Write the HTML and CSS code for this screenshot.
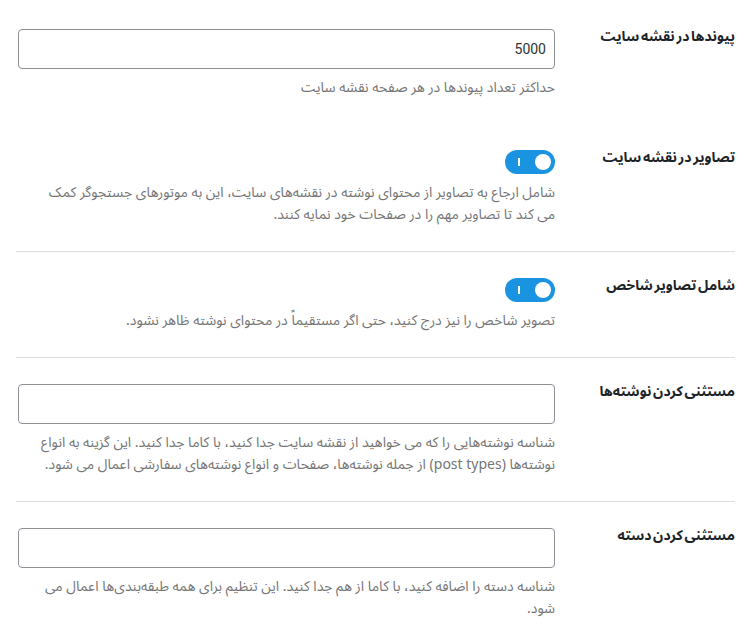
FILE: index.html
```html
<!DOCTYPE html>
<html lang="fa" dir="rtl">
<head>
<meta charset="utf-8">
<link rel="stylesheet" href="styles.css">
</head>
<body>
<div class="settings">
  <div class="row no-line">
    <div class="label">پیوندها در نقشه سایت</div>
    <div class="control">
      <div class="input">5000</div>
      <p class="desc">حداکثر تعداد پیوندها در هر صفحه نقشه سایت</p>
    </div>
  </div>
  <div class="row no-line">
    <div class="label">تصاویر در نقشه سایت</div>
    <div class="control">
      <div class="toggle"><span class="bar"></span><span class="knob"></span></div>
      <p class="desc">شامل ارجاع به تصاویر از محتوای نوشته در نقشه‌های سایت، این به موتورهای جستجوگر کمک می&nbsp;کند تا تصاویر مهم را در صفحات خود نمایه کنند.</p>
    </div>
  </div>
  <div class="row">
    <div class="label">شامل تصاویر شاخص</div>
    <div class="control">
      <div class="toggle"><span class="bar"></span><span class="knob"></span></div>
      <p class="desc">تصویر شاخص را نیز درج کنید، حتی اگر مستقیماً در محتوای نوشته ظاهر نشود.</p>
    </div>
  </div>
  <div class="row">
    <div class="label">مستثنی کردن نوشته‌ها</div>
    <div class="control">
      <div class="input"></div>
      <p class="desc">شناسه نوشته‌هایی را که می خواهید از نقشه سایت جدا کنید، با کاما جدا کنید. این گزینه به انواع نوشته‌ها (post types) از جمله نوشته‌ها، صفحات و انواع نوشته‌های سفارشی اعمال می شود.</p>
    </div>
  </div>
  <div class="row">
    <div class="label">مستثنی کردن دسته</div>
    <div class="control">
      <div class="input"></div>
      <p class="desc">شناسه دسته را اضافه کنید، با کاما از هم جدا کنید. این تنظیم برای همه طبقه‌بندی‌ها اعمال می شود.</p>
    </div>
  </div>
</div>
</body>
</html>
```

FILE: styles.css
```css
html, body {
  margin: 0;
  padding: 0;
  background: #ffffff;
}
body {
  font-family: "Noto Sans Arabic", "Vazirmatn", "DejaVu Sans", sans-serif;
  color: #1d2327;
}
.settings {
  direction: rtl;
  padding: 3px 9px 0 16px;
}
.row {
  display: grid;
  grid-template-columns: 160px 1fr;
  column-gap: 20px;
  padding: 26px 0 25px 0;
  border-top: 1px solid #dcdcde;
}
.row.no-line {
  border-top: none;
}
.label {
  font-size: 14px;
  font-weight: 700;
  line-height: 16px;
  word-spacing: -2px;
  color: #1d2327;
}
.control {
  padding-left: 2px;
}
.input {
  box-sizing: border-box;
  height: 40px;
  border: 1px solid #8c8f94;
  border-radius: 4px;
  background: #fff;
  font-family: "Roboto", "Liberation Sans", sans-serif;
  font-size: 14px;
  color: #2c3338;
  line-height: 38px;
  padding: 0 8px;
}
.desc {
  margin: 8px 0 0 0;
  font-size: 14px;
  line-height: 22px;
  color: #757575;
}
.toggle {
  position: relative;
  width: 50px;
  height: 24px;
  border-radius: 12px;
  background: #1a93e0;
}
.toggle .bar {
  position: absolute;
  left: 13px;
  top: 8px;
  width: 2px;
  height: 8px;
  background: #fff;
}
.toggle .knob {
  position: absolute;
  right: 4px;
  top: 4px;
  width: 16px;
  height: 16px;
  border-radius: 50%;
  background: #fff;
}
```
